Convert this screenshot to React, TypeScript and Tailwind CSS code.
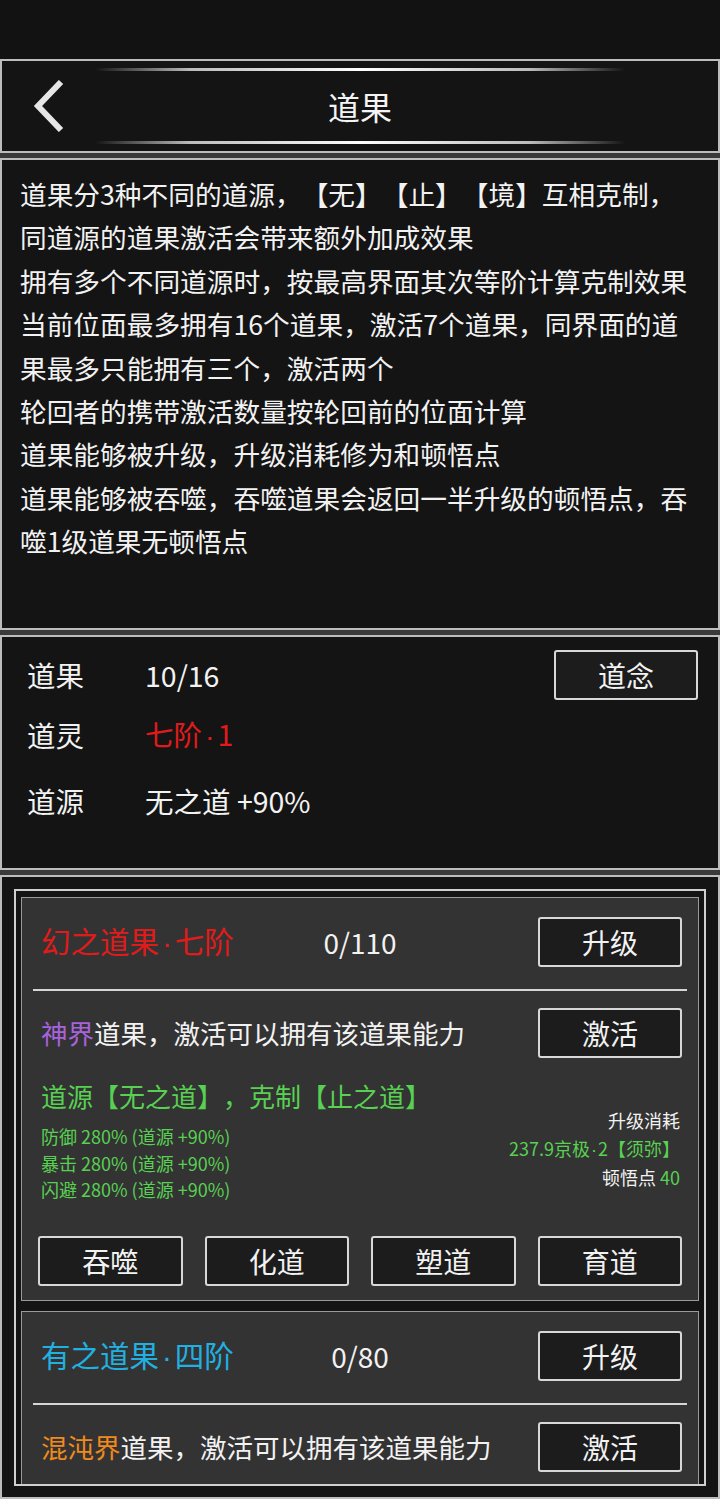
import React from 'react';

const font = "font-['Noto_Sans_CJK_SC','Noto_Sans',sans-serif]";

const descLines = [
  '道果分3种不同的道源，【无】【止】【境】互相克制，',
  '同道源的道果激活会带来额外加成效果',
  '拥有多个不同道源时，按最高界面其次等阶计算克制效果',
  '当前位面最多拥有16个道果，激活7个道果，同界面的道',
  '果最多只能拥有三个，激活两个',
  '轮回者的携带激活数量按轮回前的位面计算',
  '道果能够被升级，升级消耗修为和顿悟点',
  '道果能够被吞噬，吞噬道果会返回一半升级的顿悟点，吞',
  '噬1级道果无顿悟点',
];

// narrow latin middle dot between CJK words
const Dot = ({ tight }: { tight?: boolean }) => (
  <span className={`font-['Liberation_Sans',sans-serif] ${tight ? 'px-[1px]' : 'px-[3px]'}`}>·</span>
);

function Btn({ label }: { label: string }) {
  return (
    <button className="h-[50px] w-[144px] shrink-0 rounded-[3px] border-2 border-[#d8d8d8] bg-[#1c1c1c] text-[28px] text-[#f2f2f2]">
      {label}
    </button>
  );
}

function DaoCard({
  name, grade, titleColor, count, realm, realmColor, details,
}: {
  name: string; grade: string; titleColor: string; count: string; realm: string; realmColor: string;
  details?: { source: string; stats: string[]; cost: [string, string] };
}) {
  return (
    <div className={`shrink-0 border border-[#9a9a9a] bg-[#333333] pt-[19px] ${details ? 'pb-[14px]' : 'pb-[40px]'}`}>
      <div className="flex h-[50px] items-center pl-[19px] pr-[16px]">
        <span className={`w-[279px] text-[29.5px] ${titleColor}`}>{name}<Dot />{grade}</span>
        <span className="w-[80px] text-center text-[28px] text-[#f2f2f2]">{count}</span>
        <span className="flex-1" />
        <Btn label="升级" />
      </div>
      <div className="mx-[11px] mt-[22px] h-[2px] bg-[#d6d6d6]" />
      <div className="mt-[17px] flex h-[50px] items-center pl-[19px] pr-[16px]">
        <span className="flex-1 text-[26.5px] text-[#f2f2f2]">
          <span className={realmColor}>{realm}</span>道果，激活可以拥有该道果能力
        </span>
        <Btn label="激活" />
      </div>
      {details && (
        <>
          <div className="mt-[20px] pl-[19px] text-[26px] leading-[36px] text-[#58d052]">{details.source}</div>
          <div className="-mt-[7px] flex items-start justify-between pl-[19px] pr-[18px] text-[18px]">
            <div className="pt-[16px] leading-[26.5px] text-[#58d052]">
              {details.stats.map(s => <div key={s}>{s}</div>)}
            </div>
            <div className="text-right leading-[27.5px] text-[#f2f2f2]">
              <div>升级消耗</div>
              <div className="text-[#58d052]">{details.cost[0]}<Dot tight />{details.cost[1]}</div>
              <div>顿悟点 <span className="text-[#58d052]">40</span></div>
            </div>
          </div>
          <div className="mt-[33px] grid grid-cols-4 gap-[22px] px-[16px]">
            {['吞噬', '化道', '塑道', '育道'].map(b => (
              <button key={b} className="h-[50px] rounded-[3px] border-2 border-[#d8d8d8] bg-[#1c1c1c] text-[28px] text-[#f2f2f2]">{b}</button>
            ))}
          </div>
        </>
      )}
    </div>
  );
}

export default function App() {
  return (
    <div className={`w-[720px] h-[1499px] overflow-hidden bg-[#121212] [text-spacing-trim:space-all] ${font}`}>
      <div className="h-[59px] bg-[#121212]" />
      <div className="flex flex-col gap-[5px] bg-[#3a3a3a]">
        {/* Header */}
        <div className="flex h-[94px] flex-col border-2 border-[#bdbdbd] bg-[#141414] pt-[7px] pb-[7px]">
          <div className="mx-auto h-[3px] w-[530px] bg-[linear-gradient(to_right,transparent,#bbbbbb_18%,#ffffff_50%,#bbbbbb_82%,transparent)]" />
          <div className="flex flex-1 items-center">
            <div className="flex w-[90px] items-center pl-[26px]">
              <svg width="40" height="52" viewBox="0 0 40 52">
                <polyline points="33,2 10,26 33,50" fill="none" stroke="#e6e6e6" strokeWidth="6" strokeLinecap="butt" strokeLinejoin="miter" />
              </svg>
            </div>
            <div className="flex-1 text-center text-[32px] text-[#f4f4f4]">道果</div>
            <div className="w-[90px]" />
          </div>
          <div className="mx-auto h-[3px] w-[530px] bg-[linear-gradient(to_right,transparent,#bbbbbb_18%,#ffffff_50%,#bbbbbb_82%,transparent)]" />
        </div>

        {/* Description */}
        <div className="h-[472px] border-2 border-[#bdbdbd] bg-[#141414] pl-[18px] pt-[12px]">
          {descLines.map(l => (
            <div key={l} className="whitespace-nowrap text-[26.7px] leading-[43.4px] text-[#f2f2f2]">{l}</div>
          ))}
        </div>

        {/* Stats */}
        <div className="h-[235px] border-2 border-[#bdbdbd] bg-[#141414] pl-[25px] pr-[20px] pt-[13px] text-[28.5px] text-[#f2f2f2]">
          <div className="flex h-[50px] items-center">
            <span className="w-[118px]">道果</span>
            <span className="flex-1">10/16</span>
            <Btn label="道念" />
          </div>
          <div className="mt-[10px] flex h-[50px] items-center">
            <span className="w-[118px]">道灵</span>
            <span className="text-[#e01b1b]">七阶<Dot />1</span>
          </div>
          <div className="mt-[16px] flex h-[50px] items-center">
            <span className="w-[118px]">道源</span>
            <span>无之道 +90%</span>
          </div>
        </div>

        {/* Dao list */}
        <div className="h-[624px] border-2 border-[#bdbdbd] bg-[#141414] px-[12px] pt-[12px]">
          <div className="flex h-[597px] flex-col gap-[10px] overflow-hidden border-2 border-[#cfcfcf] px-[5px] pt-[6px]">
            <DaoCard
              name="幻之道果"
              grade="七阶"
              titleColor="text-[#e01b1b]"
              count="0/110"
              realm="神界"
              realmColor="text-[#a862dc]"
              details={{
                source: '道源【无之道】，克制【止之道】',
                stats: ['防御 280% (道源 +90%)', '暴击 280% (道源 +90%)', '闪避 280% (道源 +90%)'],
                cost: ['237.9京极', '2【须弥】'],
              }}
            />
            <DaoCard
              name="有之道果"
              grade="四阶"
              titleColor="text-[#22b0e0]"
              count="0/80"
              realm="混沌界"
              realmColor="text-[#f08a1c]"
            />
          </div>
        </div>
      </div>
    </div>
  );
}
